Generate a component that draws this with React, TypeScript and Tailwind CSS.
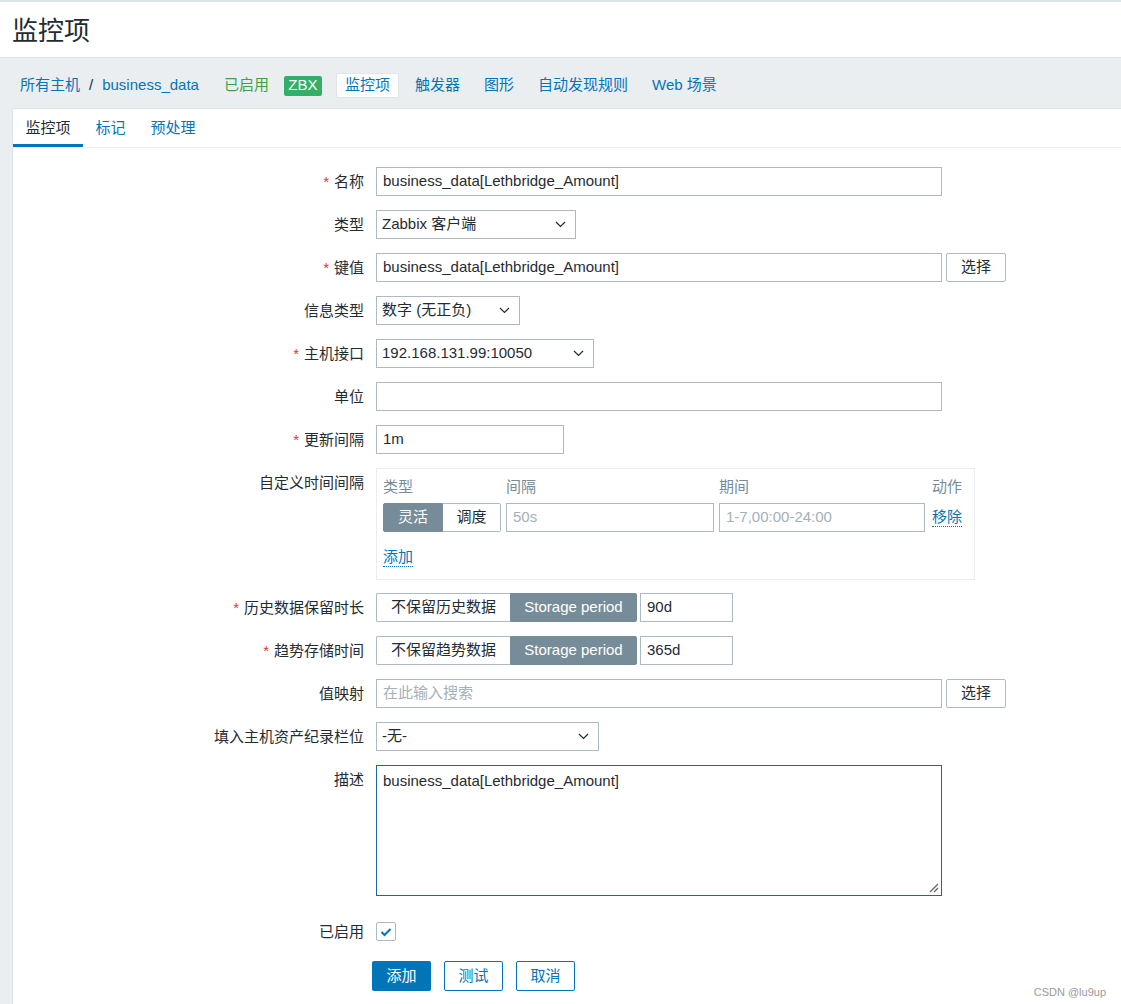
import type { ReactNode } from 'react';

const TEXT = 'text-[#1f2c33]';
const BORDER = 'border border-[#acbbc2]';

function Chevron() {
  return (
    <svg width="11" height="7" viewBox="0 0 11 7" className="shrink-0">
      <polyline points="1,1 5.5,5.5 10,1" fill="none" stroke="#1f2c33" strokeWidth="1.2" />
    </svg>
  );
}

function Field({ value, width, placeholder }: { value?: string; width: string; placeholder?: string }) {
  return (
    <div className={`${BORDER} ${width} h-[29px] bg-white px-[6px] flex items-center`}>
      {value ? <span className={TEXT}>{value}</span> : <span className="text-[#a3b1b9]">{placeholder}</span>}
    </div>
  );
}

function Select({ value, width }: { value: string; width: string }) {
  return (
    <div className={`${BORDER} ${width} h-[29px] bg-white pl-[5px] pr-[9px] flex items-center justify-between`}>
      <span className={TEXT}>{value}</span>
      <Chevron />
    </div>
  );
}

function Btn({ children }: { children: ReactNode }) {
  return (
    <div className={`${BORDER} w-[60px] h-[29px] rounded-[2px] bg-white flex items-center justify-center ${TEXT}`}>
      {children}
    </div>
  );
}

function Row({ label, required, children, className = '' }: { label: string; required?: boolean; children: ReactNode; className?: string }) {
  return (
    <div className={`flex items-start ${className}`}>
      <div className={`w-[351px] shrink-0 text-right leading-[29px] ${TEXT}`}>
        {required && <span className="text-[#e33734] mr-[5px]">*</span>}
        {label}
      </div>
      <div className="ml-3 flex items-start gap-[4px]">{children}</div>
    </div>
  );
}

function Toggle({ left, right, leftWidth, rightWidth, active }: { left: string; right: string; leftWidth: string; rightWidth: string; active: 'left' | 'right' }) {
  const on = 'bg-[#768d99] text-white border border-[#768d99]';
  const off = `bg-white ${TEXT} border border-[#acbbc2]`;
  return (
    <div className="flex h-[29px]">
      <div className={`${leftWidth} flex items-center justify-center rounded-l-[2px] ${active === 'left' ? on : off + ' border-r-0'}`}>{left}</div>
      <div className={`${rightWidth} flex items-center justify-center rounded-r-[2px] ${active === 'right' ? on : off + ' border-l-0'}`}>{right}</div>
    </div>
  );
}

export default function App() {
  return (
    <div className="relative min-h-screen bg-[#ebeef0] font-[family-name:Liberation_Sans,Noto_Sans_CJK_SC,sans-serif] text-[15px] overflow-hidden">
      {/* page header */}
      <div className="border-t-2 border-[#dfe4e7] bg-white h-[58px] border-b border-b-[#dfe4e7] flex items-center px-3 pt-[3px]">
        <h1 className={`text-[26px] ${TEXT} leading-none`}>监控项</h1>
      </div>

      {/* host navigation */}
      <div className="h-[50px] flex items-center pl-5 pt-[5px] text-[#0275b8]">
        <span>所有主机</span>
        <span className={`mx-[9px] ${TEXT}`}>/</span>
        <span>business_data</span>
        <span className="ml-[25px] text-[#429e47]">已启用</span>
        <span className="ml-[15px] h-[20px] w-[38px] rounded-[2px] bg-[#34af67] text-white flex items-center justify-center">ZBX</span>
        <div className="ml-[14px] flex items-center gap-2">
          <span className="h-[25px] px-2 flex items-center bg-white border border-[#dfe4e7] rounded-[2px]">监控项</span>
          <span className="px-2">触发器</span>
          <span className="px-2">图形</span>
          <span className="px-2">自动发现规则</span>
          <span className="px-2">Web 场景</span>
        </div>
      </div>

      {/* content panel */}
      <div className="ml-3 bg-white border-l border-t border-[#dfe4e7] min-h-[900px]">
        <div className="h-[39px] flex items-end border-b border-[#ebeef0]">
          <div className={`px-[12.5px] h-full flex items-center border-b-[3px] border-[#0275b8] pt-[4px] ${TEXT}`}>监控项</div>
          <div className="px-[12.5px] h-full flex items-center pt-px text-[#0275b8]">标记</div>
          <div className="px-[12.5px] h-full flex items-center pt-px text-[#0275b8]">预处理</div>
        </div>

        <div className="pt-[19px] flex flex-col gap-[14px]">
          <Row label="名称" required>
            <Field value="business_data[Lethbridge_Amount]" width="w-[566px]" />
          </Row>
          <Row label="类型">
            <Select value="Zabbix 客户端" width="w-[200px]" />
          </Row>
          <Row label="键值" required>
            <Field value="business_data[Lethbridge_Amount]" width="w-[566px]" />
            <Btn>选择</Btn>
          </Row>
          <Row label="信息类型">
            <Select value="数字 (无正负)" width="w-[144px]" />
          </Row>
          <Row label="主机接口" required>
            <Select value="192.168.131.99:10050" width="w-[218px]" />
          </Row>
          <Row label="单位">
            <Field width="w-[566px]" />
          </Row>
          <Row label="更新间隔" required>
            <Field value="1m" width="w-[188px]" />
          </Row>

          <Row label="自定义时间间隔">
            <div className="w-[599px] border border-[#ebeef0] pt-[8px] px-[6px] pb-[11px]">
              <div className="h-[20px] flex items-center text-[#768d99]">
                <span className="w-[123px]">类型</span>
                <span className="w-[213px]">间隔</span>
                <span className="w-[213px]">期间</span>
                <span>动作</span>
              </div>
              <div className="mt-[6px] flex items-center">
                <Toggle left="灵活" right="调度" leftWidth="w-[60px]" rightWidth="w-[58px]" active="left" />
                <div className="ml-[5px]">
                  <Field placeholder="50s" width="w-[208px]" />
                </div>
                <div className="ml-[5px]">
                  <Field placeholder="1-7,00:00-24:00" width="w-[206px]" />
                </div>
                <span className="ml-[7px] text-[#0275b8] border-b border-dotted border-[#0275b8] leading-[18px]">移除</span>
              </div>
              <div className="mt-[14px] h-[22px] flex items-center">
                <span className="text-[#0275b8] border-b border-dotted border-[#0275b8] leading-[18px]">添加</span>
              </div>
            </div>
          </Row>

          <Row label="历史数据保留时长" required className="-mt-px">
            <div className="flex gap-[3px]">
              <Toggle left="不保留历史数据" right="Storage period" leftWidth="w-[134px]" rightWidth="w-[127px]" active="right" />
              <Field value="90d" width="w-[93px]" />
            </div>
          </Row>
          <Row label="趋势存储时间" required>
            <div className="flex gap-[3px]">
              <Toggle left="不保留趋势数据" right="Storage period" leftWidth="w-[134px]" rightWidth="w-[127px]" active="right" />
              <Field value="365d" width="w-[93px]" />
            </div>
          </Row>
          <Row label="值映射">
            <Field placeholder="在此输入搜索" width="w-[566px]" />
            <Btn>选择</Btn>
          </Row>
          <Row label="填入主机资产纪录栏位">
            <Select value="-无-" width="w-[223px]" />
          </Row>
          <Row label="描述">
            <div className="relative w-[566px] h-[131px] border border-[#1f65a6] bg-white px-[6px] pt-[4px]">
              <span className={TEXT}>business_data[Lethbridge_Amount]</span>
              <svg width="10" height="10" viewBox="0 0 10 10" className="absolute right-[2px] bottom-[2px]">
                <line x1="1" y1="9" x2="9" y2="1" stroke="#666" strokeWidth="1.3" />
                <line x1="5" y1="9" x2="9" y2="5" stroke="#666" strokeWidth="1.3" />
              </svg>
            </div>
          </Row>
          <Row label="已启用" className="mt-[7px]">
            <div className="h-[29px] flex items-center">
              <div className="w-[20px] h-[19px] border border-[#acbbc2] rounded-[2px] bg-white flex items-center justify-center">
                <svg width="12" height="10" viewBox="0 0 12 10">
                  <polyline points="1.5,5 4.5,8 10.5,2" fill="none" stroke="#0275b8" strokeWidth="2" />
                </svg>
              </div>
            </div>
          </Row>
          <div className="flex pl-[359px] gap-[13px] mt-px">
            <div className="w-[59px] h-[30px] rounded-[2px] bg-[#0275b8] text-white flex items-center justify-center">添加</div>
            <div className="w-[59px] h-[30px] rounded-[2px] border border-[#0275b8] text-[#0275b8] bg-white flex items-center justify-center">测试</div>
            <div className="w-[59px] h-[30px] rounded-[2px] border border-[#0275b8] text-[#0275b8] bg-white flex items-center justify-center">取消</div>
          </div>
        </div>
      </div>

      <div className="absolute right-[15px] bottom-[8px] text-[11px] text-[#9a9a9a]">CSDN @lu9up</div>
    </div>
  );
}
